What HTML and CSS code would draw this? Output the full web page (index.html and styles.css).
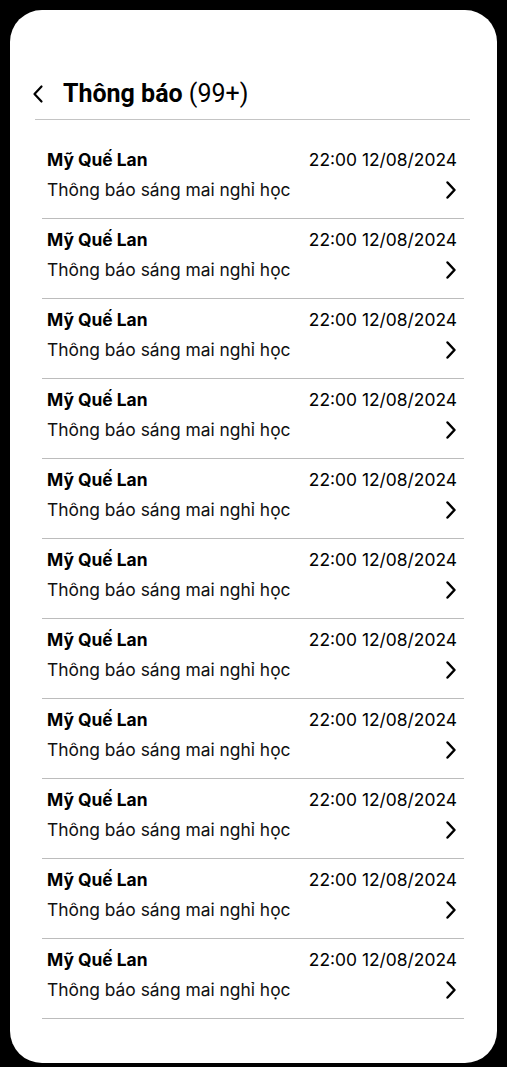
FILE: index.html
```html
<!DOCTYPE html>
<html lang="vi">
<head>
<meta charset="utf-8">
<link rel="stylesheet" href="styles.css">
</head>
<body>
<div class="phone">
  <header class="header">
    <svg class="back" width="14" height="20" viewBox="0 0 14 20"><path d="M10.5 2.5 L3.5 10 L10.5 17.5" fill="none" stroke="#000" stroke-width="2.2" stroke-linecap="round" stroke-linejoin="round"/></svg>
    <h1 class="title"><b>Thông báo</b> (99+)</h1>
  </header>
  <ul class="list">
    <li class="row"><div class="line1"><span class="name">Mỹ Quế Lan</span><span class="date">22:00 12/08/2024</span></div><div class="line2"><span class="msg">Thông báo sáng mai nghỉ học</span><svg class="chev" width="14" height="20" viewBox="0 0 14 20"><path d="M3.5 2.5 L10.5 10 L3.5 17.5" fill="none" stroke="#000" stroke-width="2.5" stroke-linecap="round" stroke-linejoin="round"/></svg></div></li>
    <li class="row"><div class="line1"><span class="name">Mỹ Quế Lan</span><span class="date">22:00 12/08/2024</span></div><div class="line2"><span class="msg">Thông báo sáng mai nghỉ học</span><svg class="chev" width="14" height="20" viewBox="0 0 14 20"><path d="M3.5 2.5 L10.5 10 L3.5 17.5" fill="none" stroke="#000" stroke-width="2.5" stroke-linecap="round" stroke-linejoin="round"/></svg></div></li>
    <li class="row"><div class="line1"><span class="name">Mỹ Quế Lan</span><span class="date">22:00 12/08/2024</span></div><div class="line2"><span class="msg">Thông báo sáng mai nghỉ học</span><svg class="chev" width="14" height="20" viewBox="0 0 14 20"><path d="M3.5 2.5 L10.5 10 L3.5 17.5" fill="none" stroke="#000" stroke-width="2.5" stroke-linecap="round" stroke-linejoin="round"/></svg></div></li>
    <li class="row"><div class="line1"><span class="name">Mỹ Quế Lan</span><span class="date">22:00 12/08/2024</span></div><div class="line2"><span class="msg">Thông báo sáng mai nghỉ học</span><svg class="chev" width="14" height="20" viewBox="0 0 14 20"><path d="M3.5 2.5 L10.5 10 L3.5 17.5" fill="none" stroke="#000" stroke-width="2.5" stroke-linecap="round" stroke-linejoin="round"/></svg></div></li>
    <li class="row"><div class="line1"><span class="name">Mỹ Quế Lan</span><span class="date">22:00 12/08/2024</span></div><div class="line2"><span class="msg">Thông báo sáng mai nghỉ học</span><svg class="chev" width="14" height="20" viewBox="0 0 14 20"><path d="M3.5 2.5 L10.5 10 L3.5 17.5" fill="none" stroke="#000" stroke-width="2.5" stroke-linecap="round" stroke-linejoin="round"/></svg></div></li>
    <li class="row"><div class="line1"><span class="name">Mỹ Quế Lan</span><span class="date">22:00 12/08/2024</span></div><div class="line2"><span class="msg">Thông báo sáng mai nghỉ học</span><svg class="chev" width="14" height="20" viewBox="0 0 14 20"><path d="M3.5 2.5 L10.5 10 L3.5 17.5" fill="none" stroke="#000" stroke-width="2.5" stroke-linecap="round" stroke-linejoin="round"/></svg></div></li>
    <li class="row"><div class="line1"><span class="name">Mỹ Quế Lan</span><span class="date">22:00 12/08/2024</span></div><div class="line2"><span class="msg">Thông báo sáng mai nghỉ học</span><svg class="chev" width="14" height="20" viewBox="0 0 14 20"><path d="M3.5 2.5 L10.5 10 L3.5 17.5" fill="none" stroke="#000" stroke-width="2.5" stroke-linecap="round" stroke-linejoin="round"/></svg></div></li>
    <li class="row"><div class="line1"><span class="name">Mỹ Quế Lan</span><span class="date">22:00 12/08/2024</span></div><div class="line2"><span class="msg">Thông báo sáng mai nghỉ học</span><svg class="chev" width="14" height="20" viewBox="0 0 14 20"><path d="M3.5 2.5 L10.5 10 L3.5 17.5" fill="none" stroke="#000" stroke-width="2.5" stroke-linecap="round" stroke-linejoin="round"/></svg></div></li>
    <li class="row"><div class="line1"><span class="name">Mỹ Quế Lan</span><span class="date">22:00 12/08/2024</span></div><div class="line2"><span class="msg">Thông báo sáng mai nghỉ học</span><svg class="chev" width="14" height="20" viewBox="0 0 14 20"><path d="M3.5 2.5 L10.5 10 L3.5 17.5" fill="none" stroke="#000" stroke-width="2.5" stroke-linecap="round" stroke-linejoin="round"/></svg></div></li>
    <li class="row"><div class="line1"><span class="name">Mỹ Quế Lan</span><span class="date">22:00 12/08/2024</span></div><div class="line2"><span class="msg">Thông báo sáng mai nghỉ học</span><svg class="chev" width="14" height="20" viewBox="0 0 14 20"><path d="M3.5 2.5 L10.5 10 L3.5 17.5" fill="none" stroke="#000" stroke-width="2.5" stroke-linecap="round" stroke-linejoin="round"/></svg></div></li>
    <li class="row"><div class="line1"><span class="name">Mỹ Quế Lan</span><span class="date">22:00 12/08/2024</span></div><div class="line2"><span class="msg">Thông báo sáng mai nghỉ học</span><svg class="chev" width="14" height="20" viewBox="0 0 14 20"><path d="M3.5 2.5 L10.5 10 L3.5 17.5" fill="none" stroke="#000" stroke-width="2.5" stroke-linecap="round" stroke-linejoin="round"/></svg></div></li>
  </ul>
</div>
</body>
</html>
```
FILE: styles.css
```css
* { box-sizing: border-box; }
html, body { margin: 0; padding: 0; }
body {
  background: #000;
  width: 507px;
  height: 1067px;
  overflow: hidden;
  font-family: Inter, "Noto Sans", sans-serif;
  color: #000;
}
.phone {
  margin: 10px;
  width: 487px;
  height: 1053px;
  background: #fff;
  border-radius: 32px;
  overflow: hidden;
  padding-top: 65px;
}
.header {
  display: flex;
  align-items: center;
  gap: 18px;
  margin: 0 27px 0 25px;
  padding: 0 0 6px 0;
  height: 38px;
  border-bottom: 1px solid #c4c4c4;
  box-sizing: content-box;
}
.back { flex: none; margin-left: -4px; }
.title {
  margin: 0;
  font-family: Roboto, "Liberation Sans", sans-serif;
  font-size: 25px;
  font-weight: 400;
  line-height: 28px;
}
.title b { font-weight: 700; }
.list {
  list-style: none;
  margin: 19px 33px 0 32px;
  padding: 0;
}
.row {
  height: 80px;
  border-bottom: 1px solid #bcbcbc;
  padding: 11px 7px 0 5px;
  display: flex;
  flex-direction: column;
  gap: 10px;
}
.line1, .line2 {
  display: flex;
  justify-content: space-between;
  align-items: center;
  height: 20px;
  font-size: 17.4px;
  line-height: 20px;
}
.name { font-weight: 700; }
.date { font-weight: 400; }
.msg { font-weight: 400; color: #111; }
.chev { flex: none; margin-right: -1px; }
```
